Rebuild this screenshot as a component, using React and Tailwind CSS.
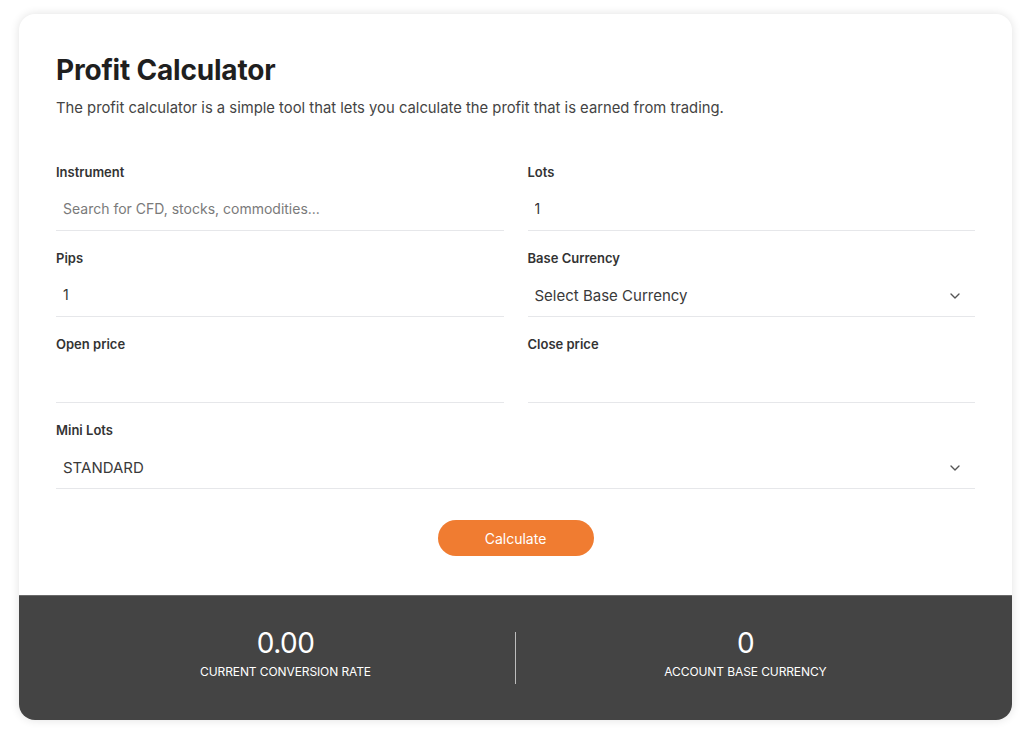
import React from 'react';
import { ChevronDown } from 'lucide-react';

const Field = ({ label, children, className = "" }) => (
    <div className={`flex flex-col ${className}`}>
        <label className="text-[13px] leading-[18px] font-semibold text-[#333]">{label}</label>
        <div className="mt-[6px] h-[44px] border-b border-[#e6e7ea] flex items-center">
            {children}
        </div>
    </div>
);

const TextInput = ({ value = "", placeholder = "" }) => (
    <input
        type="text"
        defaultValue={value}
        placeholder={placeholder}
        className="w-full h-full px-[7px] text-[14px] text-[#333] placeholder:text-[#7a7a7a] outline-none bg-transparent"
    />
);

const SelectBox = ({ value }) => (
    <div className="w-full h-full pl-[7px] pr-[12px] pt-[3px] flex items-center justify-between">
        <span className="text-[15px] text-[#3a3a3a]">{value}</span>
        <ChevronDown className="w-4 h-4 text-[#555]" strokeWidth={2} />
    </div>
);

export default function App() {
    return (
        <div className="min-h-screen bg-white pt-[14px] px-[19px] pb-[9px]" style={{ fontFamily: 'Inter, "Noto Sans", sans-serif' }}>
            <div className="w-[993px] rounded-[16px] bg-white shadow-[0_0_10px_rgba(0,0,0,0.12)] overflow-hidden">
                {/* formulaire */}
                <div className="px-[37px] pt-[39px] pb-[39px]">
                    <h1 className="text-[28px] leading-[34px] font-bold text-[#1f1f1f] tracking-[-0.2px]">Profit Calculator</h1>
                    <p className="mt-[10px] text-[14.8px] leading-[22px] text-[#444]">
                        The profit calculator is a simple tool that lets you calculate the profit that is earned from trading.
                    </p>

                    <div className="mt-[44px] grid grid-cols-2 gap-x-[24px] gap-y-[18px]">
                        <Field label="Instrument">
                            <TextInput placeholder="Search for CFD, stocks, commodities..." />
                        </Field>
                        <Field label="Lots">
                            <TextInput value="1" />
                        </Field>
                        <Field label="Pips">
                            <TextInput value="1" />
                        </Field>
                        <Field label="Base Currency">
                            <SelectBox value="Select Base Currency" />
                        </Field>
                        <Field label="Open price">
                            <TextInput />
                        </Field>
                        <Field label="Close price">
                            <TextInput />
                        </Field>
                        <Field label="Mini Lots" className="col-span-2">
                            <SelectBox value="STANDARD" />
                        </Field>
                    </div>

                    <div className="mt-[31px] flex justify-center">
                        <button className="w-[156px] h-[36px] rounded-full bg-[#f07c31] text-white text-[14px]">
                            Calculate
                        </button>
                    </div>
                </div>

                {/* résultats */}
                <div className="bg-[#444444] border-t border-[#6a6a6a] px-[37px] h-[125px] flex items-center">
                    <div className="flex-1 flex flex-col items-center text-white pb-[8px]">
                        <span className="text-[28px] leading-[30px] font-normal tracking-[-0.5px]">0.00</span>
                        <span className="mt-[6px] text-[12px] leading-[16px] uppercase tracking-[-0.1px]">Current conversion rate</span>
                    </div>
                    <div className="w-px h-[52px] bg-[#bdbdbd]" />
                    <div className="flex-1 flex flex-col items-center text-white pb-[8px]">
                        <span className="text-[28px] leading-[30px] font-normal tracking-[-0.5px]">0</span>
                        <span className="mt-[6px] text-[12px] leading-[16px] uppercase tracking-[-0.1px]">Account base currency</span>
                    </div>
                </div>
            </div>
        </div>
    );
}
